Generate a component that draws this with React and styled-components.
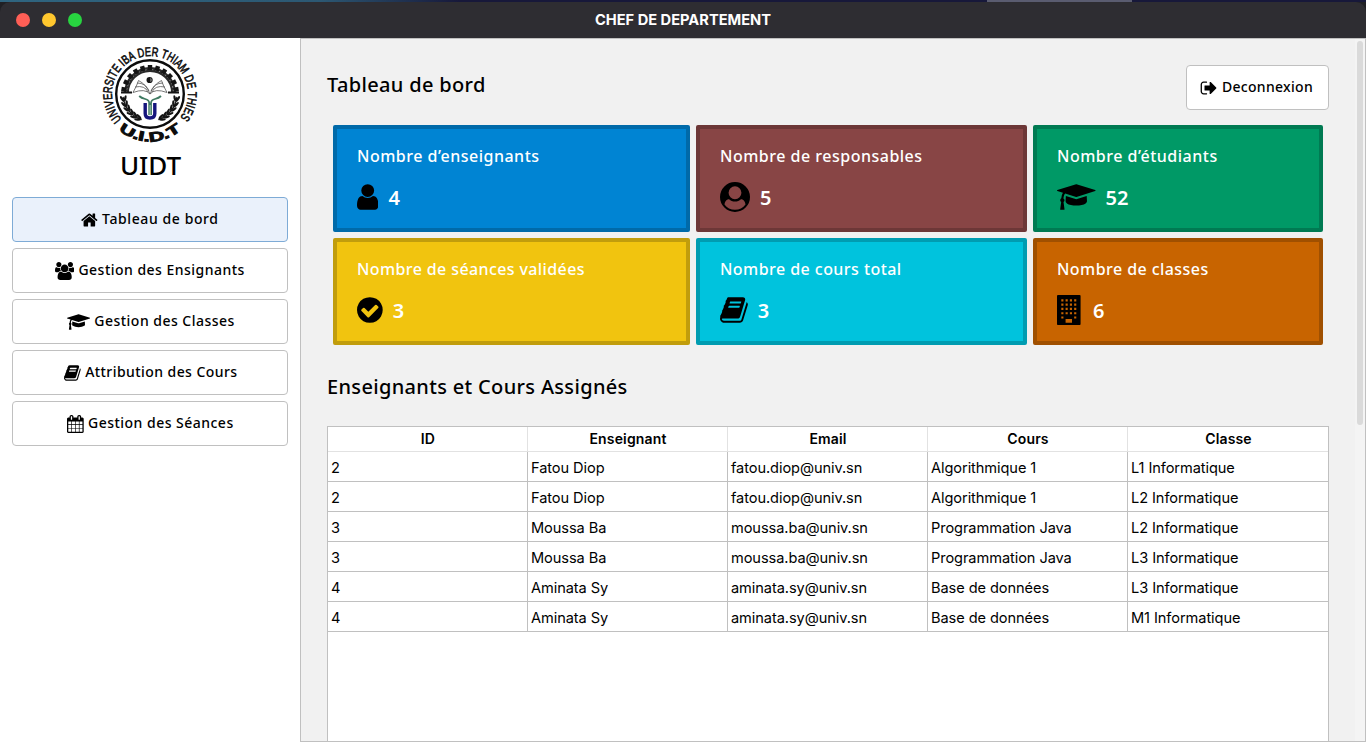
import React from "react";
import styled, { createGlobalStyle } from "styled-components";

const GlobalStyle = createGlobalStyle`
  * { box-sizing: border-box; }
  body { margin: 0; overflow: hidden; background: #fff; color: #000; }
  button { font: inherit; color: inherit; }
`;

const ui = `"Noto Sans", sans-serif`;
const tableFont = `Inter, sans-serif`;

const Window = styled.div`
  width: 1366px;
  height: 742px;
  display: flex;
  flex-direction: column;
  overflow: hidden;
  font-family: ${ui};
`;

const Desktop = styled.div`
  height: 38px;
  flex: none;
  padding-top: 2px;
  background:
    linear-gradient(#5a5c70, #5a5c70) 987px 0 / 145px 2px no-repeat,
    linear-gradient(90deg, #2f6580 0, #2c5873 320px, #17183a 460px, #17183a 100%) 0 0 / 100% 2px no-repeat,
    #202024;
`;

const TitleBar = styled.header`
  height: 36px;
  display: grid;
  grid-template-columns: 200px 1fr 200px;
  align-items: center;
  background: #2e2d32;
  border-radius: 10px 10px 0 0;
`;

const Lights = styled.div`
  display: flex;
  gap: 12px;
  padding-left: 16px;
`;

const Light = styled.span`
  width: 14px;
  height: 14px;
  border-radius: 50%;
  background: ${(p) => p.$color};
`;

const WindowTitle = styled.div`
  font: 700 14.65px/20px ${tableFont};
  color: #fff;
  text-align: center;
`;

const Body = styled.div`
  flex: 1;
  min-height: 0;
  display: flex;
`;

const Sidebar = styled.nav`
  width: 300px;
  flex: none;
  display: flex;
  flex-direction: column;
  padding: 6px 12px;
  background: #fff;
`;

const Brand = styled.div`
  display: flex;
  flex-direction: column;
  align-items: center;
  height: 153px;
  svg { margin-right: 1px; }
`;

const BrandName = styled.div`
  font: 500 26px/36px ${ui};
  margin-top: 3px;
  padding-left: 1px;
`;

const Menu = styled.div`
  display: flex;
  flex-direction: column;
  gap: 6px;
`;

const Button = styled.button`
  height: 45px;
  display: flex;
  align-items: center;
  justify-content: center;
  gap: ${(p) => p.$gap || 4}px;
  padding: 0 ${(p) => p.$right || 0}px 1px ${(p) => p.$left || 0}px;
  border: 1px solid ${(p) => (p.$active ? "#7eabd6" : "#c0c0c0")};
  border-radius: 4px;
  background: ${(p) => (p.$active ? "#eaf1fb" : "#fff")};
  font: 500 14px/20px ${ui};
  letter-spacing: ${(p) => p.$spacing || 0.5}px;
  white-space: nowrap;
  svg { position: relative; top: 1px; }
`;

const Main = styled.main`
  flex: 1;
  min-width: 0;
  display: flex;
  border: 1px solid #c0c0c0;
  background: #f1f1f1;
  overflow: hidden;
`;

const Content = styled.div`
  flex: 1;
  min-width: 0;
  display: flex;
  flex-direction: column;
  padding: 26px 26px 0;
`;

const TopRow = styled.div`
  height: 45px;
  display: flex;
  align-items: center;
  justify-content: space-between;
`;

const Heading = styled.h2`
  margin: 0;
  font: 500 20px/28px ${ui};
  letter-spacing: 0.33px;
  padding-bottom: ${(p) => p.$lift || 0}px;
`;

const Cards = styled.section`
  display: grid;
  grid-template-columns: 357px 331px 290px;
  grid-auto-rows: 107px;
  gap: 6px;
  padding: 15px 6px 0;
`;

const Card = styled.article`
  border: 4px solid ${(p) => p.$edge};
  border-radius: 2px;
  background: ${(p) => p.$fill};
  padding: 16px 20px 0;
  color: #fff;
`;

const CardLabel = styled.div`
  font: 500 16px/22px ${ui};
  letter-spacing: ${(p) => p.$spacing || 0.5}px;
`;

const CardValue = styled.div`
  display: flex;
  align-items: center;
  gap: 10px;
  height: 30px;
  margin-top: 15px;
  font: 600 20px/30px ${ui};
  svg { color: #000; }
  span { padding-top: 1px; }
`;

const SectionTitle = styled.div`
  margin-top: 28px;
  height: 53px;
`;

const TableFrame = styled.div`
  flex: 1;
  border: 1px solid #c0c0c0;
  border-bottom: 0;
  background: #fff;
  font-family: ${tableFont};
`;

const Row = styled.div`
  display: grid;
  grid-template-columns: repeat(4, 200px) 1fr;
`;

const HeadCell = styled.div`
  height: 25px;
  padding-left: 1px;
  border-bottom: 1px solid #e2e2e2;
  border-right: 1px solid #e2e2e2;
  text-align: center;
  font: 600 14px/24px ${tableFont};
  letter-spacing: 0.15px;
  &:last-child { border-right: 0; }
`;

const Cell = styled.div`
  height: 30px;
  padding: 1px 3px 0;
  border-bottom: 1px solid #c0c0c0;
  border-right: 1px solid #c0c0c0;
  font: 400 14.6px/30px ${tableFont};
  letter-spacing: -0.08px;
  white-space: nowrap;
  &:last-child { border-right: 0; }
`;

const ScrollTrack = styled.div`
  width: 10px;
  flex: none;
  padding: 2px 2px 0;
  background: #f4f4f4;
`;

const ScrollThumb = styled.div`
  height: 384px;
  border-radius: 3px;
  background: #dadada;
`;

const glyphs = {
  home: [64, 1664, "M1472 992v480q0 26-19 45t-45 19h-384v-384h-256v384h-384q-26 0-45-19t-19-45v-480q0-1 .5-3t.5-3l575-474 575 474q1 2 1 6zm223-69l-62 74q-8 9-21 11h-3q-13 0-21-7l-692-577-692 577q-12 8-24 7-13-2-21-11l-62-74q-8-10-7-23.5t11-21.5l719-599q32-26 76-26t76 26l244 204v-195q0-14 9-23t23-9h192q14 0 23 9t9 23v408l219 182q10 8 11 21.5t-7 23.5z"],
  users: [0, 1920, "M593 896q-162 5-265 128h-134q-82 0-138-40.5t-56-118.5q0-353 124-353 6 0 43.5 21t97.5 42.5 119 21.5q67 0 133-23-5 37-5 66 0 139 81 256zm1071 637q0 120-73 189.5t-194 69.5h-874q-121 0-194-69.5t-73-189.5q0-53 3.5-103.5t14-109 26.5-108.5 43-97.5 62-81 85.5-53.5 111.5-20q10 0 43 21.5t73 48 107 48 135 21.5 135-21.5 107-48 73-48 43-21.5q61 0 111.5 20t85.5 53.5 62 81 43 97.5 26.5 108.5 14 109 3.5 103.5zm-1024-1277q0 106-75 181t-181 75-181-75-75-181 75-181 181-75 181 75 75 181zm704 384q0 159-112.5 271.5t-271.5 112.5-271.5-112.5-112.5-271.5 112.5-271.5 271.5-112.5 271.5 112.5 112.5 271.5zm576 225q0 78-56 118.5t-138 40.5h-134q-103-123-265-128 81-117 81-256 0-29-5-66 66 23 133 23 59 0 119-21.5t97.5-42.5 43.5-21q124 0 124 353zm-128-609q0 106-75 181t-181 75-181-75-75-181 75-181 181-75 181 75 75 181z"],
  cap: [0, 2304, "M1774 836l18 316q4 69-82 128t-235 93.5-323 34.5-323-34.5-235-93.5-82-128l18-316 574 181q22 7 48 7t48-7zm530-324q0 23-22 31l-1120 352q-4 1-10 1t-10-1l-652-206q-43 34-71 111.5t-34 178.5q63 36 63 109 0 69-58 107l58 433q2 14-8 25-9 11-24 11h-192q-15 0-24-11-10-11-8-25l58-433q-58-38-58-107 0-73 65-111 11-207 98-330l-333-104q-22-8-22-31t22-31l1120-352q4-1 10-1t10 1l1120 352q22 8 22 31z"],
  book: [64, 1664, "M1703 478q40 57 18 129l-275 906q-19 64-76.5 107.5t-122.5 43.5h-923q-77 0-148.5-53.5t-99.5-131.5q-24-67-2-127 0-4 3-27t4-37q1-8-3-21.5t-3-19.5q2-11 8-21t16.5-23.5 16.5-23.5q23-38 45-91.5t30-91.5q3-10 .5-30t-.5-28q3-11 17-28t17-23q21-36 42-92t25-90q1-9-2.5-32t.5-28q4-13 22-30.5t22-22.5q19-26 42.5-84.5t27.5-96.5q1-8-3-25.5t-2-26.5q2-8 9-18t18-23 17-21q8-12 16.5-30.5t15-35 16-36 19.5-32 26.5-23.5 36-11.5 47.5 5.5l-1 3q38-9 51-9h761q74 0 114 56t18 130l-274 906q-36 119-71.5 153.5t-128.5 34.5h-869q-27 0-38 15-11 16-1 43 24 70 144 70h923q29 0 56-15.5t35-41.5l300-987q7-22 5-57 38 15 59 43zm-1064 2q-4 13 2 22.5t20 9.5h608q13 0 25.5-9.5t16.5-22.5l21-64q4-13-2-22.5t-20-9.5h-608q-13 0-25.5 9.5t-16.5 22.5zm-83 256q-4 13 2 22.5t20 9.5h608q13 0 25.5-9.5t16.5-22.5l21-64q4-13-2-22.5t-20-9.5h-608q-13 0-25.5 9.5t-16.5 22.5z"],
  calendar: [64, 1664, "M192 1664h288v-288h-288v288zm352 0h320v-288h-320v288zm-352-352h288v-320h-288v320zm352 0h320v-320h-320v320zm-352-384h288v-288h-288v288zm736 736h320v-288h-320v288zm-384-736h320v-288h-320v288zm768 736h288v-288h-288v288zm-384-352h320v-320h-320v320zm-352-864v-288q0-13-9.5-22.5t-22.5-9.5h-64q-13 0-22.5 9.5t-9.5 22.5v288q0 13 9.5 22.5t22.5 9.5h64q13 0 22.5-9.5t9.5-22.5zm736 864h288v-320h-288v320zm-384-384h320v-288h-320v288zm384 0h288v-288h-288v288zm32-480v-288q0-13-9.5-22.5t-22.5-9.5h-64q-13 0-22.5 9.5t-9.5 22.5v288q0 13 9.5 22.5t22.5 9.5h64q13 0 22.5-9.5t9.5-22.5zm384-64v1280q0 52-38 90t-90 38h-1408q-52 0-90-38t-38-90v-1280q0-52 38-90t90-38h128v-96q0-66 47-113t113-47h64q66 0 113 47t47 113v96h384v-96q0-66 47-113t113-47h64q66 0 113 47t47 113v96h128q52 0 90 38t38 90z"],
  signOut: [0, 1664, "M704 1440q0 4 1 20t.5 26.5-3 23.5-10 19.5-20.5 6.5h-320q-119 0-203.5-84.5t-84.5-203.5v-704q0-119 84.5-203.5t203.5-84.5h320q13 0 22.5 9.5t9.5 22.5q0 4 1 20t.5 26.5-3 23.5-10 19.5-20.5 6.5h-320q-66 0-113 47t-47 113v704q0 66 47 113t113 47h312l11.5 1 11.5 3 8 5.5 7 9 2 13.5zm928-544q0 26-19 45l-544 544q-19 19-45 19t-45-19-19-45v-288h-448q-26 0-45-19t-19-45v-384q0-26 19-45t45-19h448v-288q0-26 19-45t45-19 45 19l544 544q19 19 19 45z"],
  user: [256, 1280, "M1536 1399q0 109-62.5 187t-150.5 78h-854q-88 0-150.5-78t-62.5-187q0-85 8.5-160.5t31.5-152 58.5-131 94-89 134.5-34.5q131 128 313 128t313-128q76 0 134.5 34.5t94 89 58.5 131 31.5 152 8.5 160.5zm-256-887q0 159-112.5 271.5t-271.5 112.5-271.5-112.5-112.5-271.5 112.5-271.5 271.5-112.5 271.5 112.5 112.5 271.5z"],
  userCircle: [0, 1792, "M896 0a896 896 0 1 1 0 1792a896 896 0 1 1 0-1792zM1523 1339c-22-157-93-315-273-315c-92 90-216 147-354 147s-262-57-354-147c-180 0-251 158-273 315c140 197 369 325 627 325s487-128 627-325zM1280 640a384 384 0 1 0-768 0a384 384 0 1 0 768 0z"],
  check: [128, 1536, "M1412 734q0-28-18-46l-91-90q-19-19-45-19t-45 19l-408 407-226-226q-19-19-45-19t-45 19l-91 90q-18 18-18 46 0 27 18 45l362 362q19 19 45 19 27 0 46-19l543-543q18-18 18-45zm252 162q0 209-103 385.5t-279.5 279.5-385.5 103-385.5-103-279.5-279.5-103-385.5 103-385.5 279.5-279.5 385.5-103 385.5 103 279.5 279.5 103 385.5z"],
};

function Icon({ name, size }) {
  const [x, w, d] = glyphs[name];
  return (
    <svg width={(w / 1792) * size} height={size} viewBox={`${x} 0 ${w} 1792`} fill="currentColor" fillRule="evenodd" aria-hidden="true">
      <path d={d} />
    </svg>
  );
}

function BuildingIcon() {
  const lights = [];
  for (let r = 0; r < 5; r++)
    for (let c = 0; c < 4; c++)
      if (r < 4 || c === 0 || c === 3)
        lights.push(`M${256 + c * 256} ${256 + r * 256}h128v128h-128z`);
  return (
    <svg width="26" height="30" viewBox="0 0 1552 1792" fillRule="evenodd" aria-hidden="true">
      <path fill="currentColor" d={`M64 0h1280q26 0 45 19t19 45v1664q0 26-19 45t-45 19h-1280q-26 0-45-19t-19-45v-1664q0-26 19-45t45-19zM512 1440h384v224h-384z${lights.join("")}`} />
    </svg>
  );
}

/* Polar helper for the crest, angles in degrees clockwise from the right. */
const at = (r, deg) => {
  const a = (deg * Math.PI) / 180;
  return `${(r * Math.cos(a)).toFixed(2)} ${(r * Math.sin(a)).toFixed(2)}`;
};

function Wreath() {
  const leaves = [170, 158, 147, 136, 126, 116];
  return (
    <g fill="#151515">
      <path d={`M${at(27, 174)}A27 27 0 0 0 ${at(27, 108)}`} fill="none" stroke="#151515" strokeWidth="1.2" />
      {leaves.map((a) => (
        <g key={a} transform={`rotate(${a})`}>
          <ellipse cx="28.4" cy="0" rx="1.2" ry="3.3" transform="rotate(-22 28.4 0)" />
          <ellipse cx="25.2" cy="0" rx="1.2" ry="3.3" transform="rotate(22 25.2 0)" />
        </g>
      ))}
    </g>
  );
}

function Crest() {
  const teeth = [];
  for (let a = -80; a <= 80; a += 16) {
    teeth.push(<rect key={a} x="-2.2" y="-29" width="4.4" height="5" transform={`rotate(${a})`} />);
  }
  return (
    <svg width="100" height="100" viewBox="-50 -50 100 100" role="img">
      <defs>
        <path id="ring" d={`M${at(38, 138)}A38 38 0 1 1 ${at(38, 39)}`} />
        <path id="base" d={`M${at(47.6, 131)}A47.6 47.6 0 0 0 ${at(47.6, 48)}`} />
      </defs>
      <g fontFamily="Liberation Sans, sans-serif" fill="#0c0c0c" stroke="#0c0c0c">
        <text fontSize="12.6" strokeWidth=".6" style={{ fontKerning: "none" }}>
          <textPath href="#ring" textLength="172" lengthAdjust="spacingAndGlyphs">UNIVERSITE IBA DER THIAM DE THIES</textPath>
        </text>
        <text fontSize="13.5" fontWeight="700" strokeWidth=".9">
          <textPath href="#base" textLength="68" lengthAdjust="spacingAndGlyphs">U.I.D.T</textPath>
        </text>
      </g>
      <circle r="33.8" fill="#fff" stroke="#0c0c0c" strokeWidth="2.4" />
      <path d="M-23.500 -1a23.500 23.500 0 0 1 47 0" fill="none" stroke="#2a2a2a" strokeWidth="4.800" />
      <path d="M-23.500 -1a23.500 23.500 0 0 1 47 0" fill="none" stroke="#a5a5a5" strokeWidth="1" strokeDasharray="1.500 2" />
      <path d="M-29 -1.500h11M29 -1.500h-11" stroke="#151515" strokeWidth="2.200" />
      <g fill="#151515">{teeth}</g>
      <circle cx="-.4" cy="-14" r="3.1" fill="#151515" />
      <path d="M.5 -16.300a3 3 0 0 1 0 4.600z" fill="#aaa" />
      <path d="M0 0q-5-6-17-1.500q4-7 5.500-12q8 4 11.500 13.500q3.500-9.500 11.500-13.500q1.500 5 5.500 12q-12-4.500-17 1.500M-2-2q-3-7-13-5M-1-3q-3-8-12-8M2-2q3-7 13-5M1-3q3-8 12-8" fill="none" stroke="#555" strokeWidth=".8" />
      <Wreath />
      <g transform="scale(-1 1)"><Wreath /></g>
      <path d="M-4.800 9v10.500q0 4.500 4.800 4.500t4.800-4.500v-10.500" fill="none" stroke="#15157c" strokeWidth="3.400" />
      <path d="M-.8 21v-12q0-3-4-4t-6-3M1 21v-12q0-3 4-4t6-3" fill="none" stroke="#3f7a62" strokeWidth="1.800" />
      <path d="M.1 22v-11" stroke="#cfe3da" strokeWidth=".8" />
    </svg>
  );
}

const menu = [
  ["home", "Tableau de bord", 0.6, 0],
  ["users", "Gestion des Ensignants", 0.48, 0],
  ["cap", "Gestion des Classes", 0.48, 2],
  ["book", "Attribution des Cours", 0.43, 2],
  ["calendar", "Gestion des Séances", 0.48, 1],
];

const cards = [
  ["Nombre d’enseignants", "4", "user", "#0084d3", "#006aa9", 0.5],
  ["Nombre de responsables", "5", "userCircle", "#884545", "#6d3737", 0.5],
  ["Nombre d’étudiants", "52", "cap", "#009966", "#007a52", 0.5],
  ["Nombre de séances validées", "3", "check", "#f1c40f", "#c19d0c", 0.39],
  ["Nombre de cours total", "3", "book", "#00c3dd", "#009cb1", 0.45],
  ["Nombre de classes", "6", "building", "#c86400", "#a05000", 0.44],
];

const columns = ["ID", "Enseignant", "Email", "Cours", "Classe"];

const rows = [
  ["2", "Fatou Diop", "fatou.diop@univ.sn", "Algorithmique 1", "L1 Informatique"],
  ["2", "Fatou Diop", "fatou.diop@univ.sn", "Algorithmique 1", "L2 Informatique"],
  ["3", "Moussa Ba", "moussa.ba@univ.sn", "Programmation Java", "L2 Informatique"],
  ["3", "Moussa Ba", "moussa.ba@univ.sn", "Programmation Java", "L3 Informatique"],
  ["4", "Aminata Sy", "aminata.sy@univ.sn", "Base de données", "L3 Informatique"],
  ["4", "Aminata Sy", "aminata.sy@univ.sn", "Base de données", "M1 Informatique"],
];

export default function App() {
  return (
    <Window>
      <GlobalStyle />
      <Desktop>
        <TitleBar>
          <Lights>
            <Light $color="#ff5f56" />
            <Light $color="#ffc72e" />
            <Light $color="#28d440" />
          </Lights>
          <WindowTitle>CHEF DE DEPARTEMENT</WindowTitle>
        </TitleBar>
      </Desktop>
      <Body>
        <Sidebar>
          <Brand>
            <Crest />
            <BrandName>UIDT</BrandName>
          </Brand>
          <Menu>
            {menu.map(([icon, label, spacing, left], i) => (
              <Button key={label} $active={i === 0} $spacing={spacing} $left={left}>
                <Icon name={icon} size={18} />
                <span>{label}</span>
              </Button>
            ))}
          </Menu>
        </Sidebar>
        <Main>
          <Content>
            <TopRow>
              <Heading $lift={6}>Tableau de bord</Heading>
              <Button $gap={5} $left={13} $right={15} $spacing={0.3}>
                <Icon name="signOut" size={18} />
                <span>Deconnexion</span>
              </Button>
            </TopRow>
            <Cards>
              {cards.map(([label, value, icon, fill, edge, spacing]) => (
                <Card key={label} $fill={fill} $edge={edge}>
                  <CardLabel $spacing={spacing}>{label}</CardLabel>
                  <CardValue>
                    {icon === "building" ? <BuildingIcon /> : <Icon name={icon} size={30} />}
                    <span>{value}</span>
                  </CardValue>
                </Card>
              ))}
            </Cards>
            <SectionTitle>
              <Heading>Enseignants et Cours Assignés</Heading>
            </SectionTitle>
            <TableFrame>
              <Row>
                {columns.map((c) => <HeadCell key={c}>{c}</HeadCell>)}
              </Row>
              {rows.map((r, i) => (
                <Row key={i}>
                  {r.map((v, j) => <Cell key={j}>{v}</Cell>)}
                </Row>
              ))}
            </TableFrame>
          </Content>
          <ScrollTrack><ScrollThumb /></ScrollTrack>
        </Main>
      </Body>
    </Window>
  );
}
